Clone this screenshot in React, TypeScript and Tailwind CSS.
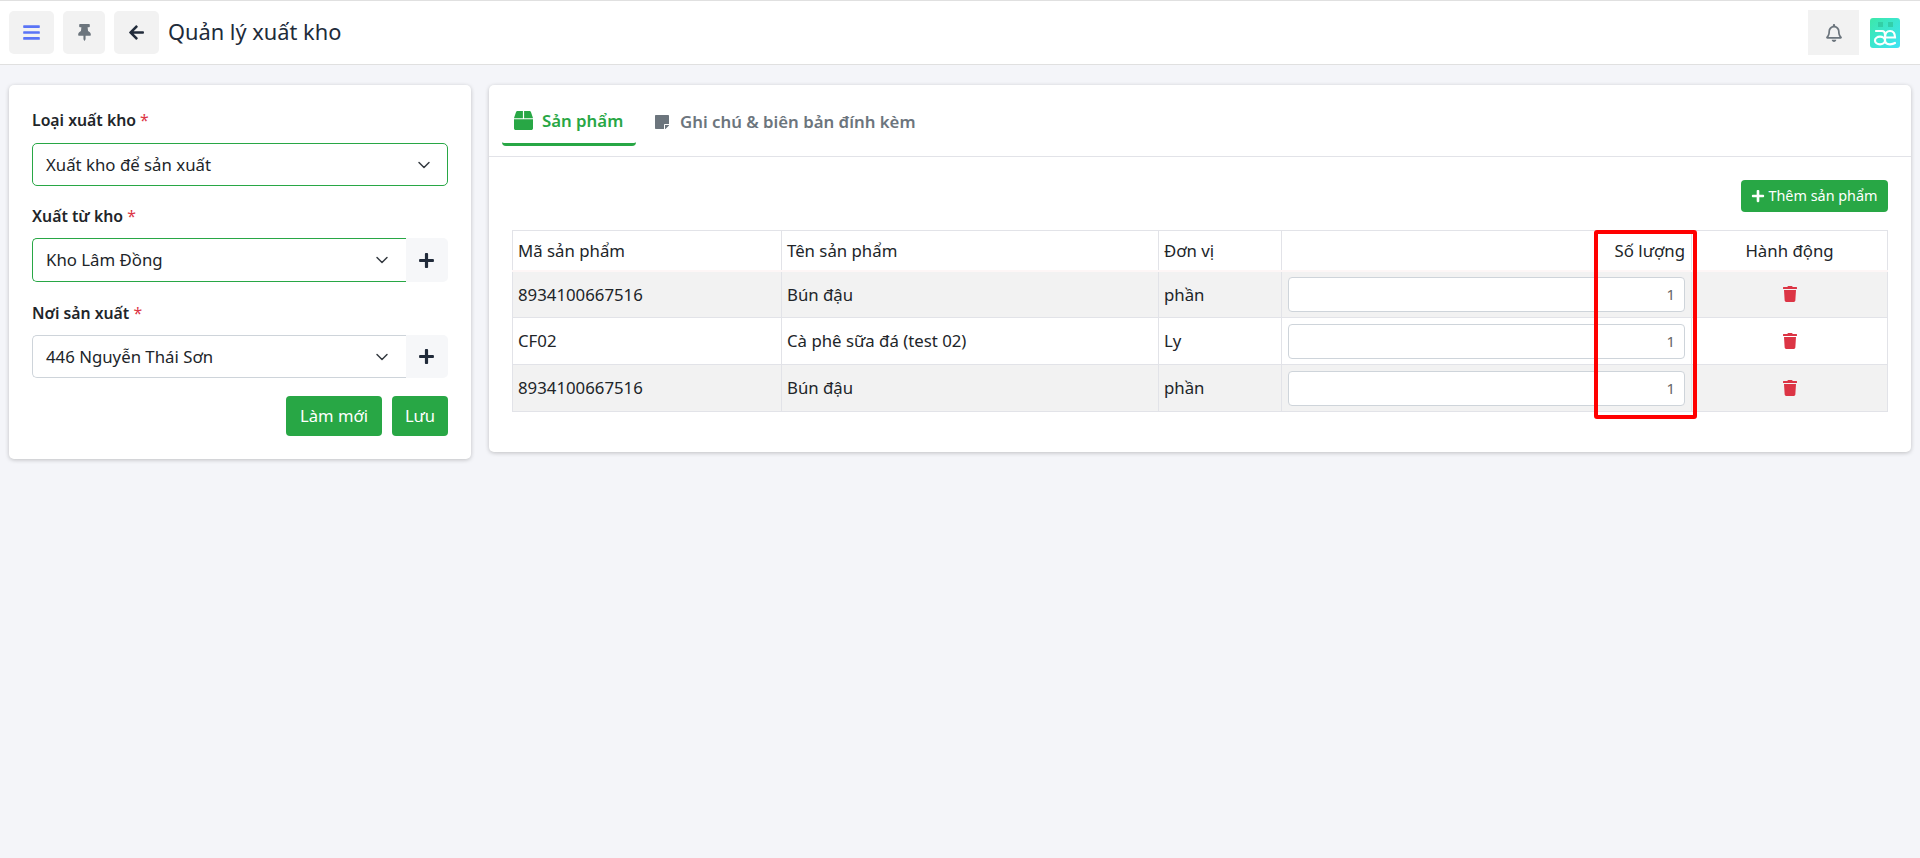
import React from "react";
import { ChevronDown } from "lucide-react";
import { FaBars, FaThumbtack, FaArrowLeft, FaPlus, FaTrash, FaBox, FaStickyNote, FaRegBell } from "react-icons/fa";

const font = { fontFamily: '"Noto Sans", sans-serif' };

function Label({ children }: { children: React.ReactNode }) {
  return (
    <div className="text-[15.8px] leading-[20px] font-semibold text-[#212529]">
      {children} <span className="text-[#dc3545] font-normal">*</span>
    </div>
  );
}

function Select({ text, green, addon, h }: { text: string; green?: boolean; addon?: boolean; h: string }) {
  return (
    <div className={`flex items-stretch ${h}`}>
      <div
        className={`flex-1 flex items-center justify-between pl-[13px] border bg-white text-[16.8px] text-[#212529] ${
          green ? "border-[#28a745]" : "border-[#ced4da]"
        } ${addon ? "rounded-l-[5px] border-r-0 pr-[14px]" : "rounded-[5px] pr-[13px]"}`}
      >
        <span>{text}</span>
        <ChevronDown size={20} strokeWidth={1.75} className="text-[#343a40]" />
      </div>
      {addon && (
        <div className="w-[42px] pr-[2px] flex items-center justify-center bg-[#f6f7f9] rounded-r-[5px] text-[#212b3a]">
          <FaPlus size={17} />
        </div>
      )}
    </div>
  );
}

const rows = [
  ["8934100667516", "Bún đậu", "phần"],
  ["CF02", "Cà phê sữa đá (test 02)", "Ly"],
  ["8934100667516", "Bún đậu", "phần"],
];

const th = "border border-[#e2e3e8] border-b-2 border-b-[#fdf6f6] font-normal";
const td = "border border-[#e2e3e8] px-[5px]";

export default function App() {
  return (
    <div style={font} className="min-h-[858px] bg-[#f4f5f9] relative">
      <header className="h-[65px] bg-white border-t border-b border-[#e0e0e0] flex items-center pl-[9px] pr-[20px]">
        <button className="w-[45px] h-[43px] bg-[#f2f2f2] rounded-[5px] flex items-center justify-center text-[#5a74f6]">
          <FaBars size={19} />
        </button>
        <button className="ml-[9px] w-[42px] h-[43px] bg-[#f2f2f2] rounded-[5px] flex items-center justify-center text-[#6c757d]">
          <FaThumbtack size={17} />
        </button>
        <button className="ml-[9px] w-[45px] h-[43px] bg-[#f2f2f2] rounded-[5px] flex items-center justify-center text-[#212b3a]">
          <FaArrowLeft size={17} />
        </button>
        <h1 className="ml-[9px] text-[21.8px] font-normal text-[#212b3a]">Quản lý xuất kho</h1>
        <div className="ml-auto flex items-center gap-[11px]">
          <div className="w-[51px] h-[45px] bg-[#f2f2f2] flex items-center justify-center text-[#6c757d]">
            <FaRegBell size={18} />
          </div>
          <div className="w-[30px] h-[30px] rounded-[3px] bg-gradient-to-br from-[#3de8a8] to-[#3fe3f4] overflow-hidden">
            <svg width="30" height="30" viewBox="0 0 30 30" fill="none">
              <rect x="8" y="4" width="5" height="5" fill="#2fc9a0" opacity="0.8" />
              <rect x="18" y="4" width="5" height="5" fill="#2fc9a0" opacity="0.8" />
              <g stroke="#ffffff" strokeWidth="2.2" strokeLinecap="round">
                <path d="M6 13 H12 Q15 13 15 16.5 V22" />
                <ellipse cx="10" cy="22.5" rx="5" ry="3.8" />
                <path d="M15 19.5 Q15 13 20 13 Q25 13 25 19.5 H15" />
                <path d="M15 22 Q15 26.3 20 26.3 Q23 26.3 25 25" />
              </g>
            </svg>
          </div>
        </div>
      </header>

      <main className="flex items-start gap-[18px] px-[9px] pt-[20px]">
        <section className="w-[462px] shrink-0 h-[374px] bg-white rounded-[5px] shadow-[0_1px_4px_rgba(0,0,0,0.22)] px-[23px] pt-[25px]">
          <Label>Loại xuất kho</Label>
          <div className="mt-[13px]"><Select h="h-[43px]" text="Xuất kho để sản xuất" green /></div>
          <div className="mt-[20px]"><Label>Xuất từ kho</Label></div>
          <div className="mt-[12px]"><Select h="h-[44px]" text="Kho Lâm Đồng" green addon /></div>
          <div className="mt-[21px]"><Label>Nơi sản xuất</Label></div>
          <div className="mt-[12px]"><Select h="h-[43px]" text="446 Nguyễn Thái Sơn" addon /></div>
          <div className="mt-[18px] flex justify-end gap-[10px]">
            <button className="h-[40px] w-[96px] rounded-[4px] bg-[#28a745] text-white text-[16.6px]">Làm mới</button>
            <button className="h-[40px] w-[56px] rounded-[4px] bg-[#28a745] text-white text-[16.6px]">Lưu</button>
          </div>
        </section>

        <section className="flex-1 min-w-0 h-[367px] bg-white rounded-[5px] shadow-[0_1px_4px_rgba(0,0,0,0.22)]">
          <div className="h-[72px] border-b border-[#e2e3e8] flex items-start pl-[13px]">
            <div className="w-[134px] mt-[1px] h-[60px] pt-[12px] pl-[12px] border-b-[3px] border-[#28a745] rounded-b-[4px] flex items-center gap-[9px] text-[#28a745] text-[16.8px] font-semibold">
              <FaBox size={19} />
              <span>Sản phẩm</span>
            </div>
            <div className="ml-[18px] h-[60px] mt-[1px] pt-[12px] flex items-center gap-[10px] text-[#6c757d] text-[16.8px] font-semibold">
              <FaStickyNote size={16} />
              <span>Ghi chú &amp; biên bản đính kèm</span>
            </div>
          </div>
          <div className="pl-[23px] pr-[24px]">
            <div className="flex justify-end pt-[23px] h-[73px]">
              <button className="h-[32px] w-[147px] -mr-[1px] rounded-[4px] bg-[#28a745] text-white text-[14.4px] flex items-center justify-center gap-[3px]">
                <FaPlus size={14} />
                <span>Thêm sản phẩm</span>
              </button>
            </div>
            <table className="w-full border-collapse table-fixed text-[16.8px] text-[#212529]">
              <colgroup>
                <col className="w-[269px]" />
                <col className="w-[377px]" />
                <col className="w-[123px]" />
                <col className="w-[410px]" />
                <col className="w-[196px]" />
              </colgroup>
              <thead>
                <tr className="h-[40px]">
                  <th className={`${th} px-[5px] text-left`}>Mã sản phẩm</th>
                  <th className={`${th} px-[5px] text-left`}>Tên sản phẩm</th>
                  <th className={`${th} px-[5px] text-left`}>Đơn vị</th>
                  <th className={`${th} px-[6px] text-right`}>Số lượng</th>
                  <th className={`${th} px-[5px] text-center`}>Hành động</th>
                </tr>
              </thead>
              <tbody>
                {rows.map((r, i) => (
                  <tr key={i} className={`h-[47px] ${i % 2 === 0 ? "bg-[#f2f2f2]" : "bg-white"}`}>
                    <td className={td}>{r[0]}</td>
                    <td className={td}>{r[1]}</td>
                    <td className={td}>{r[2]}</td>
                    <td className="border border-[#e2e3e8] px-[6px]">
                      <div className="h-[35px] bg-white border border-[#ced4da] rounded-[4px] flex items-center justify-end pr-[9px] text-[15px] text-[#666666]">1</div>
                    </td>
                    <td className="border border-[#e2e3e8] text-[#dc3545]">
                      <div className="flex justify-center"><FaTrash size={16} /></div>
                    </td>
                  </tr>
                ))}
              </tbody>
            </table>
          </div>
        </section>
      </main>

      <div className="absolute left-[1594px] top-[230px] w-[103px] h-[189px] border-[4px] border-[#ff0000] rounded-[3px] pointer-events-none" />
    </div>
  );
}
